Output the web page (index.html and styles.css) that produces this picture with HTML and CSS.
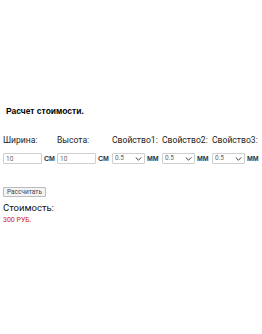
FILE: index.html
```html
<!DOCTYPE html>
<html>
<head>
<meta charset="utf-8">
<link rel="stylesheet" href="styles.css">
</head>
<body>
<div class="page">
  <h3 class="title">Расчет стоимости.</h3>
  <div class="grid">
    <div class="label">Ширина:</div>
    <div class="label">Высота:</div>
    <div class="label">Свойство1:</div>
    <div class="label">Свойство2:</div>
    <div class="label">Свойство3:</div>
    <div class="cell"><input class="num" type="text" value="10"><span class="unit">СМ</span></div>
    <div class="cell"><input class="num" type="text" value="10"><span class="unit">СМ</span></div>
    <div class="cell"><span class="selwrap"><select class="sel"><option>0.5</option></select><svg class="chev" viewBox="0 0 8 5" width="7" height="4"><path d="M0.5 0.5 L4 4 L7.5 0.5" fill="none" stroke="#333" stroke-width="1.2"/></svg></span><span class="unit">ММ</span></div>
    <div class="cell"><span class="selwrap"><select class="sel"><option>0.5</option></select><svg class="chev" viewBox="0 0 8 5" width="7" height="4"><path d="M0.5 0.5 L4 4 L7.5 0.5" fill="none" stroke="#333" stroke-width="1.2"/></svg></span><span class="unit">ММ</span></div>
    <div class="cell"><span class="selwrap"><select class="sel"><option>0.5</option></select><svg class="chev" viewBox="0 0 8 5" width="7" height="4"><path d="M0.5 0.5 L4 4 L7.5 0.5" fill="none" stroke="#333" stroke-width="1.2"/></svg></span><span class="unit">ММ</span></div>
  </div>
  <button class="btn">Рассчитать</button>
  <div class="cost">Стоимость:</div>
  <div class="price">300 РУБ.</div>
</div>
</body>
</html>
```
FILE: styles.css
```css
html, body {
  margin: 0;
  padding: 0;
  background: #ffffff;
}
.page {
  padding: 0 3px;
  font-family: Roboto, "Liberation Sans", sans-serif;
  color: #111;
}
.title {
  margin: 0;
  padding: 105px 0 0 3px;
  font-family: "Liberation Sans", Arial, sans-serif;
  font-size: 8.5px;
  font-weight: bold;
  color: #000;
  line-height: 12px;
}
.grid {
  display: grid;
  grid-template-columns: 54px 55px 50px 50px 50px;
  margin-top: 16px;
  row-gap: 6px;
}
.label {
  font-size: 8.6px;
  line-height: 14px;
  color: #222;
  white-space: nowrap;
}
.cell {
  display: flex;
  align-items: center;
  gap: 2px;
  white-space: nowrap;
}
.num {
  box-sizing: border-box;
  width: 39px;
  height: 11px;
  margin: 0;
  padding: 0 2px;
  border: 1px solid #cfcfcf;
  border-radius: 1px;
  font-family: Roboto, sans-serif;
  font-size: 6.5px;
  color: #666;
  outline: none;
}
.selwrap {
  position: relative;
  display: inline-block;
  height: 11px;
}
.sel {
  -webkit-appearance: none;
  appearance: none;
  display: block;
  box-sizing: border-box;
  width: 33px;
  height: 11px;
  margin: 0;
  padding: 0 2px;
  border: 1px solid #cfcfcf;
  border-radius: 1px;
  font-family: Roboto, sans-serif;
  font-size: 6.5px;
  line-height: 9px;
  color: #666;
  background: #fff;
  outline: none;
}
.chev {
  position: absolute;
  right: 3px;
  top: 4px;
  pointer-events: none;
}
.unit {
  font-family: "Liberation Sans", Arial, sans-serif;
  font-size: 7px;
  font-weight: bold;
  color: #333;
}
.btn {
  display: block;
  margin-top: 23px;
  box-sizing: border-box;
  height: 10px;
  padding: 0 3px;
  border: 1px solid #bbb;
  border-radius: 1px;
  background: #f4f4f4;
  font-family: Roboto, sans-serif;
  font-size: 6.5px;
  color: #444;
  line-height: 8px;
}
.cost {
  margin-top: 4px;
  font-size: 9.5px;
  line-height: 14px;
  color: #111;
}
.price {
  margin-top: 1px;
  font-size: 7px;
  line-height: 9px;
  color: #cc2222;
}
```
